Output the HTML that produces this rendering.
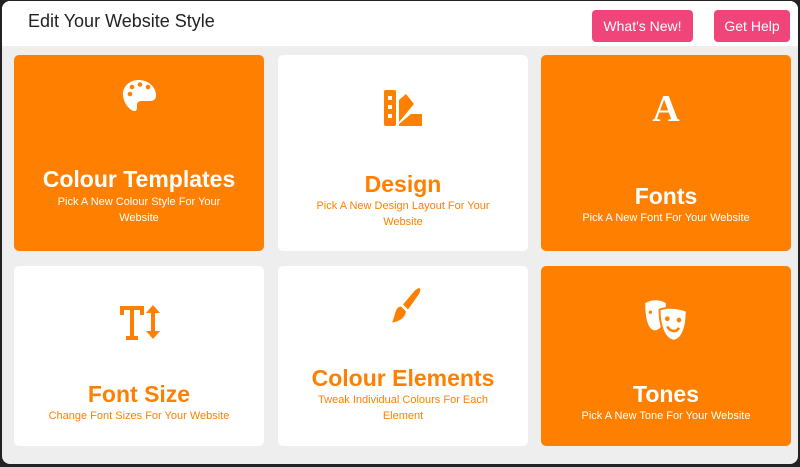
<!DOCTYPE html>
<html><head><meta charset="utf-8"><style>
*{margin:0;padding:0;box-sizing:border-box}
html,body{width:800px;height:467px;overflow:hidden;background:#222}
body{font-family:"Liberation Sans",sans-serif}
.win{position:absolute;left:2px;top:1px;width:796px;height:463px;background:#eeeeee;border-radius:8px;overflow:hidden}
.hdr{position:absolute;left:0;top:0;width:796px;height:45px;background:#fff}
.hdr h1{position:absolute;left:26px;top:10px;font-size:18px;font-weight:normal;color:#222}
.btn{position:absolute;top:9px;height:32px;background:#f0457a;color:#fff;font-size:14px;border-radius:4px;display:flex;align-items:center;justify-content:center}
.card{position:absolute;border-radius:5px;text-align:center}
.o{background:#ff8000;color:#fff}
.w{background:#fff;color:#ff8000}
.t{position:absolute;left:0;right:0;font-weight:bold;font-size:23px}
.s{position:absolute;left:30px;right:30px;font-size:11px;line-height:16px}
.ic{position:absolute;left:50%;transform:translateX(-50%)}
</style></head><body>
<div class="win">
<div class="hdr"><h1>Edit Your Website Style</h1>
<div class="btn" style="left:590px;width:101px">What's New!</div>
<div class="btn" style="left:712px;width:76px">Get Help</div></div>

<div class="card o" style="left:12px;top:54px;width:250px;height:196px">
<svg class="ic" style="top:24px" width="36" height="34" viewBox="0 0 36 34"><path d="M18 1C8 1 1 8 2 17c1 7 6 14 11 15 3 1 3-3 3-6 0-3 2-4 5-4h8c4 0 6-2 6-6C35 8 27 1 18 1z" fill="#fff"/><circle cx="9" cy="15" r="2.3" fill="#ff8000"/><circle cx="11" cy="8" r="2.3" fill="#ff8000"/><circle cx="19" cy="5.5" r="2.3" fill="#ff8000"/><circle cx="27" cy="8" r="2.3" fill="#ff8000"/></svg>
<div class="t" style="top:111px">Colour Templates</div>
<div class="s" style="top:139px">Pick A New Colour Style For Your Website</div></div>

<div class="card w" style="left:276px;top:54px;width:250px;height:196px">
<svg class="ic" style="top:35px" width="38" height="36" viewBox="0 0 38 36"><rect x="0" y="0" width="12" height="36" rx="2" fill="#ff8000"/><rect x="4" y="6" width="4" height="4" fill="#fff"/><rect x="4" y="15" width="4" height="4" fill="#fff"/><rect x="4" y="24" width="4" height="4" fill="#fff"/><path d="M15 10l7-6 8 10-15 18z" fill="#ff8000"/><path d="M15 34l12-10h11v12H15z" fill="#ff8000"/></svg>
<div class="t" style="top:116px">Design</div>
<div class="s" style="top:143px">Pick A New Design Layout For Your Website</div></div>

<div class="card o" style="left:539px;top:54px;width:250px;height:196px">
<div class="ic" style="top:34px;font-family:'Liberation Serif',serif;font-weight:bold;font-size:38px;line-height:40px">A</div>
<div class="t" style="top:128px">Fonts</div>
<div class="s" style="top:155px">Pick A New Font For Your Website</div></div>

<div class="card w" style="left:12px;top:265px;width:250px;height:180px">
<svg class="ic" style="top:38px" width="44" height="36" viewBox="0 0 42 36"><path d="M2 2h24v9h-4V6h-6v26h4v4H8v-4h4V6H6v5H2z" fill="#ff8000"/><path d="M35 1l7 8h-5v18h5l-7 8-7-8h5V9h-5z" fill="#ff8000"/></svg>
<div class="t" style="top:115px">Font Size</div>
<div class="s" style="top:142px">Change Font Sizes For Your Website</div></div>

<div class="card w" style="left:276px;top:265px;width:250px;height:180px">
<svg class="ic" style="top:21px" width="38" height="37" viewBox="0 0 38 36"><path d="M36 1c1 1 0 4-2 7L24 22l-5-5L30 4c3-3 5-4 6-3z" fill="#ff8000"/><path d="M17 19l5 5c-1 6-6 10-14 11 1-2 2-5 3-9 1-4 3-7 6-7z" fill="#ff8000"/></svg>
<div class="t" style="top:99px">Colour Elements</div>
<div class="s" style="top:126px">Tweak Individual Colours For Each Element</div></div>

<div class="card o" style="left:539px;top:265px;width:250px;height:180px">
<svg class="ic" style="top:32px" width="46" height="44" viewBox="0 0 34 34"><path d="M1 4c5-3 11-3 16 0l-1 10c-1 7-4 11-8 11C3 24 1 16 1 4z" fill="#fff"/><path d="M12 9c5-2 14-2 21 1 0 12-3 22-10 23-7-1-11-11-11-24z" fill="#fff" stroke="#ff8000" stroke-width="1.5"/><circle cx="18" cy="16" r="1.8" fill="#ff8000"/><circle cx="27" cy="17" r="1.8" fill="#ff8000"/><path d="M18 22c2 4 7 5 9 1" stroke="#ff8000" stroke-width="2" fill="none"/><circle cx="5" cy="11" r="1.3" fill="#ff8000"/></svg>
<div class="t" style="top:115px">Tones</div>
<div class="s" style="top:142px">Pick A New Tone For Your Website</div></div>
</div>
</body></html>
